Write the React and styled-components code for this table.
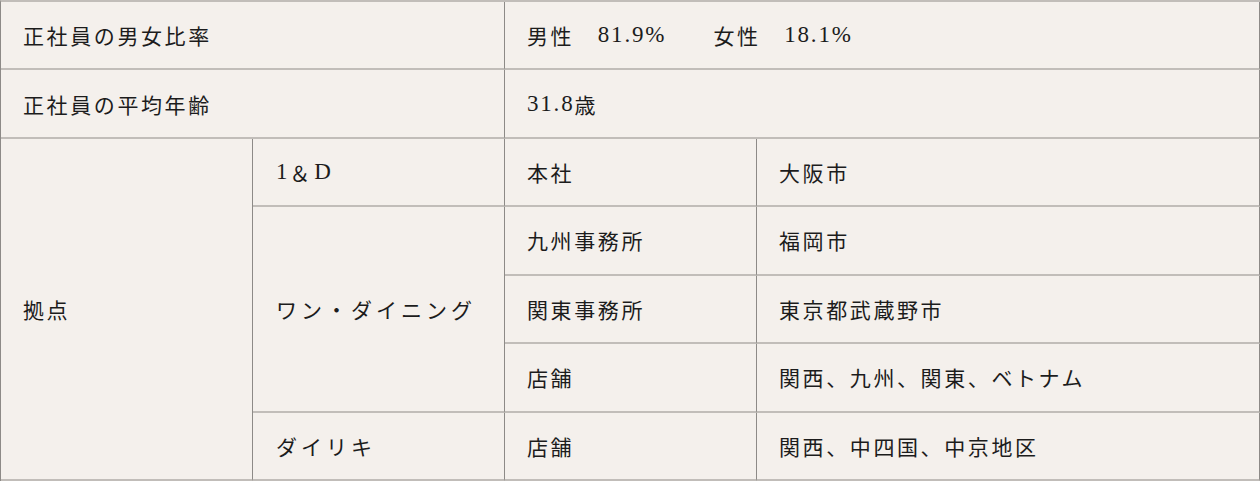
import styled, { createGlobalStyle } from "styled-components";

const Global = createGlobalStyle`
  html, body {
    margin: 0;
    padding: 0;
    background: #ffffff;
  }
`;

const Grid = styled.div`
  box-sizing: border-box;
  width: 1260px;
  height: 481px;
  display: grid;
  grid-template-columns: 252px 252px 252px 503px;
  grid-template-rows: repeat(7, 1fr);
  background: #f4f0ec;
  border-top: 2px solid #c1bdb9;
  border-left: 1px solid #8d8a87;
  font-family: "Liberation Serif", "Noto Sans CJK JP", serif;
  color: #1c1c1c;
`;

const Cell = styled.div`
  box-sizing: border-box;
  display: flex;
  align-items: center;
  padding: 0 0 0 ${(p) => (p.$indent ? 23 : 22)}px;
  border-right: 1px solid #8d8a87;
  border-bottom: 2px solid #c1bdb9;
  font-size: 21px;
  letter-spacing: ${(p) => (p.$wide ? "4px" : "2.6px")};
  white-space: pre;
  grid-column: ${(p) => p.$col || "auto"};
  grid-row: ${(p) => p.$row || "auto"};
`;

const Num = styled.span`
  font-size: 23px;
  letter-spacing: 1.8px;
`;

const App = () => {
  return (
    <>
      <Global />
      <Grid>
        <Cell $col="1 / span 2">正社員の男女比率</Cell>
        <Cell $col="3 / span 2">
          男性　<Num>81.9%</Num>　　女性　<Num>18.1%</Num>
        </Cell>

        <Cell $col="1 / span 2">正社員の平均年齢</Cell>
        <Cell $col="3 / span 2">
          <Num>31.8</Num>歳
        </Cell>

        <Cell $col="1" $row="3 / span 5">拠点</Cell>
        <Cell $col="2" $row="3" $indent $wide>
          <Num>1</Num>＆<Num>D</Num>
        </Cell>
        <Cell $col="3" $row="3">本社</Cell>
        <Cell $col="4" $row="3">大阪市</Cell>

        <Cell $col="2" $row="4 / span 3" $indent $wide>ワン・ダイニング</Cell>
        <Cell $col="3" $row="4">九州事務所</Cell>
        <Cell $col="4" $row="4">福岡市</Cell>
        <Cell $col="3" $row="5">関東事務所</Cell>
        <Cell $col="4" $row="5">東京都武蔵野市</Cell>
        <Cell $col="3" $row="6">店舗</Cell>
        <Cell $col="4" $row="6">関西、九州、関東、ベトナム</Cell>

        <Cell $col="2" $row="7" $indent $wide>ダイリキ</Cell>
        <Cell $col="3" $row="7">店舗</Cell>
        <Cell $col="4" $row="7">関西、中四国、中京地区</Cell>
      </Grid>
    </>
  );
};

export default App;
